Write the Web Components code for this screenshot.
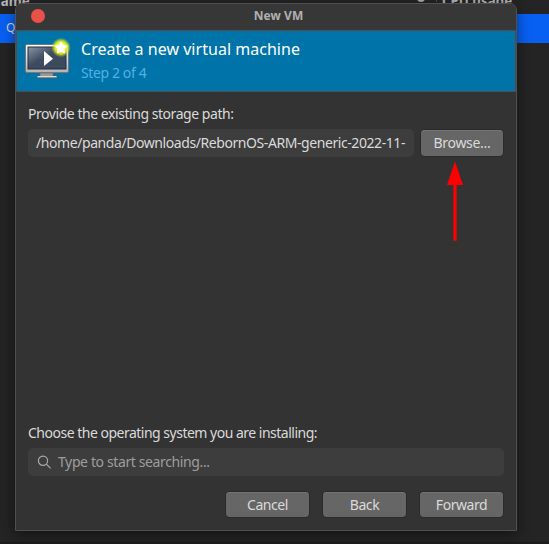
<!DOCTYPE html>
<html lang="en"><head><meta charset="utf-8"><title>New VM</title>
<style>
html,body{margin:0;height:100%;overflow:hidden;background:#242424}
body{font:14px/18px "Noto Sans",sans-serif;letter-spacing:-.45px;color:#dadada}
</style></head><body>
<vm-desktop>
<vm-dialog heading="New VM">
<vm-banner slot="banner"><span>Create a new virtual machine</span><span slot="step">Step 2 of 4</span></vm-banner>
<vm-storage></vm-storage>
<vm-os></vm-os>
<vm-actions slot="footer"><vm-button>Cancel</vm-button><vm-button>Back</vm-button><vm-button>Forward</vm-button></vm-actions>
</vm-dialog>
<red-arrow></red-arrow>
</vm-desktop>
<script>
const define=(name,html)=>customElements.define(name,class extends HTMLElement{
 constructor(){super();const t=document.createElement('template');t.innerHTML=html;this.attachShadow({mode:'open'}).append(t.content.cloneNode(true));}
 connectedCallback(){const h=this.shadowRoot.querySelector('.heading');if(h)h.textContent=this.getAttribute('heading');}
});
define('vm-desktop',`<style>
:host{display:block;position:relative;width:549px;height:544px;overflow:hidden;background:#242424}
.head{height:14px;display:flex;justify-content:space-between;font-size:13.33px;letter-spacing:0;font-weight:700;color:#b5b5b5;line-height:18px}
.head span{margin-top:-8px;white-space:nowrap}
.name{margin-left:-10px}.right{display:flex;width:132px;gap:6px}.right i{width:8px;height:8px;border-radius:50%;background:#aaa;margin-top:-6px}.right b{width:1px;height:2px;background:#484848;margin:0 4px 0 5px}
.row{height:29px;background:#0860f2;line-height:28px;padding-left:6px;font-size:12px}
.edge{position:absolute;left:0;bottom:0;width:100%;height:2px;background:#1c1c1c}
</style><div class="head"><span class="name">Name</span><div class="right"><i></i><b></b><span style="margin-left:-5px">CPU usage</span></div></div><div class="row">Q</div><div class="edge"></div><slot></slot>`);
define('vm-dialog',`<style>
:host{position:absolute;left:15px;top:3px;width:502px;height:528px;box-sizing:border-box;border:1px solid #505050;border-radius:7px 7px 0 0;background:#333;display:flex;flex-direction:column;box-shadow:0 4px 14px #0007}
header{height:26px;flex:none;border-bottom:1px solid #4d4d4d;display:grid;grid-template-columns:1fr auto 1fr;align-items:center;background:#373737;border-radius:6px 6px 0 0;padding-left:25px;box-sizing:content-box}
.dot{width:14px;height:14px;border-radius:50%;background:#ea5149;margin-left:-10px;margin-top:-2px}
.heading{font-weight:700;font-size:12px;letter-spacing:.08px;line-height:16px;color:#b0b0b0;margin-top:-2px}
main{flex:1;display:flex;flex-direction:column;justify-content:space-between;padding:13px 12px 0}
</style><header><div class="dot"></div><div class="heading"></div></header><slot name="banner"></slot><main><slot></slot></main><slot name="footer"></slot>`);
define('vm-banner',`<style>
:host{height:60px;flex:none;margin:0 1px;background:#0073a9;box-shadow:-1px 0 #4d4d4d,1px 0 #4d4d4d;border-bottom:1px solid #4d4d4d;display:flex;gap:10px;padding-left:6px;box-sizing:content-box}
svg{width:48px;height:48px;margin-top:6px}
.t{font-size:16px;letter-spacing:.03px;line-height:22px;color:#fff;margin-top:7px;white-space:nowrap}
.s{color:#4fb2e3;letter-spacing:-.38px;line-height:18px;margin-top:4px}
</style><svg viewBox="0 0 48 48"><defs><linearGradient id="f" x2="0" y2="1"><stop stop-color="#fff"/><stop offset="1" stop-color="#b3b3b3"/></linearGradient><linearGradient id="s" x2="1" y2="1"><stop stop-color="#8795a5"/><stop offset=".45" stop-color="#3e4b5f"/><stop offset="1" stop-color="#3c4a5e"/></linearGradient><radialGradient id="g"><stop offset=".4" stop-color="#f9ff42"/><stop offset=".65" stop-color="#dcef29" stop-opacity=".9"/><stop offset="1" stop-color="#cfe000" stop-opacity="0"/></radialGradient></defs>
<path d="M17 36h13v3h3q1 1 1 2H14q0-2 3-2z" fill="#999" stroke="#666" stroke-width=".6"/><path d="M14.5 39.5h19" stroke="#ddd"/><rect x="2.5" y="7.5" width="43" height="28" rx="1.5" fill="url(#f)" stroke="#777"/><rect x="5" y="10" width="38" height="22" fill="url(#s)" stroke="#242f40"/>
<path d="M21 14v15l9-7.3z" fill="#fff"/><circle cx="38" cy="10.5" r="9.8" fill="url(#g)"/><path d="M38 5l1.8 3.6 4 .6-2.9 2.8.7 4-3.6-1.9-3.6 1.9.7-4-2.9-2.8 4-.6z" fill="#fff" stroke="#fff" stroke-linejoin="round"/></svg><div><div class="t"><slot></slot></div><div class="s"><slot name="step"></slot></div></div>`);
define('vm-button',`<style>
:host{display:block;width:83px;height:25px;line-height:26px;text-align:center;border-radius:4px;background:#666;box-shadow:inset 0 1px #747474,0 0 0 1px #2b2b2b;flex:none}
</style><slot></slot>`);
define('vm-field',`<style>
:host{display:flex;align-items:center;box-sizing:border-box;height:28px;border-radius:5px;background:#3d3d3d;padding:0 8px;overflow:hidden;white-space:nowrap}
</style><slot></slot>`);
define('vm-storage',`<style>
:host{display:block}.r{display:flex;gap:7px;margin-top:6px}vm-field{width:386px;letter-spacing:-.425px}vm-button{width:82px;height:26px;margin-top:1px;letter-spacing:-.3px}
</style><div>Provide the existing storage path:</div><div class="r"><vm-field><span>/home/panda/Downloads/RebornOS-ARM-generic-2022-11-</span></vm-field><vm-button>Browse...</vm-button></div>`);
define('vm-os',`<style>
:host{display:block}.l{letter-spacing:-.5px}vm-field{margin-top:6px;color:#9d9d9d;letter-spacing:-.38px}svg{width:16px;height:16px;margin:0 5px 0 1px}
</style><div class="l">Choose the operating system you are installing:</div><vm-field><svg viewBox="0 0 16 16" fill="none" stroke="#aaa" stroke-width="1.2"><circle cx="6" cy="6.7" r="4.6"/><path d="M9.4 10.1l4.2 4.3"/></svg><span>Type to start searching...</span></vm-field>`);
define('vm-actions',`<style>
:host{display:flex;justify-content:flex-end;gap:14px;padding:16px 13px 13px;flex:none}
</style><slot></slot>`);
define('red-arrow',`<style>:host{position:absolute;left:445px;top:160px;width:20px;height:82px}svg{display:block}</style><svg width="20" height="82"><path d="M10 1.5L18 25H11.6v55.8H8.4V25H2z" fill="red"/></svg>`);
</script></body></html>
